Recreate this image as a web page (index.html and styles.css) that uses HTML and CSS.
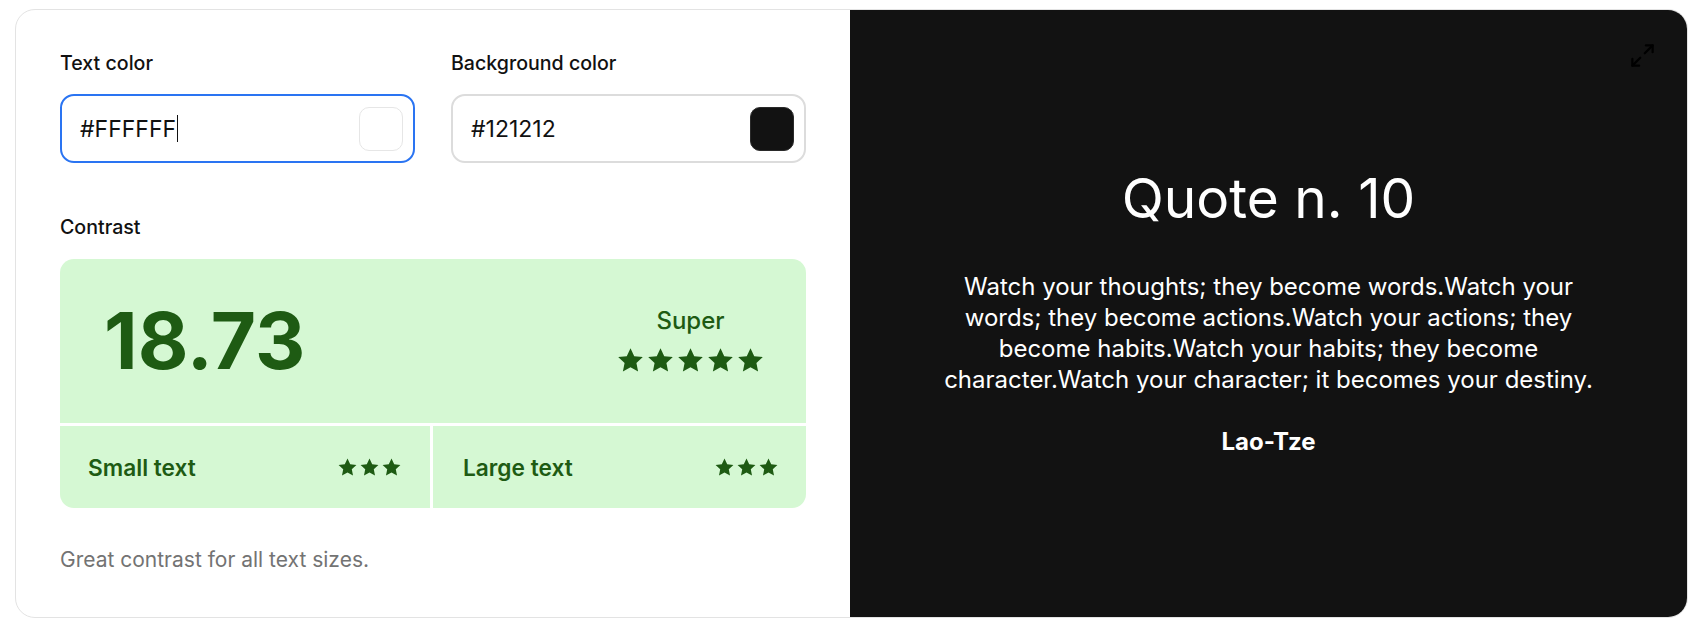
FILE: index.html
```html
<!DOCTYPE html>
<html lang="en">
<head>
<meta charset="utf-8">
<title>Contrast checker</title>
<link rel="stylesheet" href="styles.css">
</head>
<body>
<div class="card">
  <section class="controls">
    <div class="fields">
      <div class="field">
        <div class="label">Text color</div>
        <div class="input focused">
          <span class="value">#FFFFFF<span class="caret"></span></span>
          <span class="swatch swatch-white"></span>
        </div>
      </div>
      <div class="field">
        <div class="label">Background color</div>
        <div class="input">
          <span class="value">#121212</span>
          <span class="swatch swatch-dark"></span>
        </div>
      </div>
    </div>
    <div class="label contrast-label">Contrast</div>
    <div class="result">
      <div class="result-main">
        <div class="ratio">18.73</div>
        <div class="rating">
          <div class="rating-name">Super</div>
          <div class="stars stars-lg">
            <svg viewBox="0 0 24 24"><path d="M12 1.8l3.1 6.6 7.1.8-5.3 4.9 1.4 7.1L12 17.6l-6.3 3.6 1.4-7.1-5.3-4.9 7.1-.8z"/></svg>
            <svg viewBox="0 0 24 24"><path d="M12 1.8l3.1 6.6 7.1.8-5.3 4.9 1.4 7.1L12 17.6l-6.3 3.6 1.4-7.1-5.3-4.9 7.1-.8z"/></svg>
            <svg viewBox="0 0 24 24"><path d="M12 1.8l3.1 6.6 7.1.8-5.3 4.9 1.4 7.1L12 17.6l-6.3 3.6 1.4-7.1-5.3-4.9 7.1-.8z"/></svg>
            <svg viewBox="0 0 24 24"><path d="M12 1.8l3.1 6.6 7.1.8-5.3 4.9 1.4 7.1L12 17.6l-6.3 3.6 1.4-7.1-5.3-4.9 7.1-.8z"/></svg>
            <svg viewBox="0 0 24 24"><path d="M12 1.8l3.1 6.6 7.1.8-5.3 4.9 1.4 7.1L12 17.6l-6.3 3.6 1.4-7.1-5.3-4.9 7.1-.8z"/></svg>
          </div>
        </div>
      </div>
      <div class="result-cell">
        <span class="cell-name">Small text</span>
        <div class="stars stars-sm">
          <svg viewBox="0 0 24 24"><path d="M12 1.8l3.1 6.6 7.1.8-5.3 4.9 1.4 7.1L12 17.6l-6.3 3.6 1.4-7.1-5.3-4.9 7.1-.8z"/></svg>
          <svg viewBox="0 0 24 24"><path d="M12 1.8l3.1 6.6 7.1.8-5.3 4.9 1.4 7.1L12 17.6l-6.3 3.6 1.4-7.1-5.3-4.9 7.1-.8z"/></svg>
          <svg viewBox="0 0 24 24"><path d="M12 1.8l3.1 6.6 7.1.8-5.3 4.9 1.4 7.1L12 17.6l-6.3 3.6 1.4-7.1-5.3-4.9 7.1-.8z"/></svg>
        </div>
      </div>
      <div class="result-cell cell-right">
        <span class="cell-name">Large text</span>
        <div class="stars stars-sm">
          <svg viewBox="0 0 24 24"><path d="M12 1.8l3.1 6.6 7.1.8-5.3 4.9 1.4 7.1L12 17.6l-6.3 3.6 1.4-7.1-5.3-4.9 7.1-.8z"/></svg>
          <svg viewBox="0 0 24 24"><path d="M12 1.8l3.1 6.6 7.1.8-5.3 4.9 1.4 7.1L12 17.6l-6.3 3.6 1.4-7.1-5.3-4.9 7.1-.8z"/></svg>
          <svg viewBox="0 0 24 24"><path d="M12 1.8l3.1 6.6 7.1.8-5.3 4.9 1.4 7.1L12 17.6l-6.3 3.6 1.4-7.1-5.3-4.9 7.1-.8z"/></svg>
        </div>
      </div>
    </div>
    <p class="note">Great contrast for all text sizes.</p>
  </section>
  <section class="preview">
    <button class="expand" aria-label="Fullscreen">
      <svg viewBox="0 0 24 24" fill="none" stroke="currentColor" stroke-width="2" stroke-linecap="round" stroke-linejoin="round"><polyline points="15 3 21 3 21 9"/><polyline points="9 21 3 21 3 15"/><line x1="21" y1="3" x2="14" y2="10"/><line x1="3" y1="21" x2="10" y2="14"/></svg>
    </button>
    <h1 class="quote-title">Quote n. 10</h1>
    <p class="quote-text">Watch your thoughts; they become words.Watch your words; they become actions.Watch your actions; they become habits.Watch your habits; they become character.Watch your character; it becomes your destiny.</p>
    <p class="quote-author">Lao-Tze</p>
  </section>
</div>
</body>
</html>
```

FILE: styles.css
```css
* { box-sizing: border-box; }

html, body {
  margin: 0;
  padding: 0;
  background: #ffffff;
  font-family: Inter, "Noto Sans", "Liberation Sans", sans-serif;
  color: #111111;
}

.card {
  margin: 9px 6px 0 15px;
  height: 609px;
  border: 1px solid #e3e3e3;
  border-radius: 20px;
  overflow: hidden;
  display: grid;
  grid-template-columns: 834px 1fr;
}

/* Left panel */
.controls {
  padding: 41px 44px 0 44px;
  display: flex;
  flex-direction: column;
}

.fields {
  display: grid;
  grid-template-columns: 355px 355px;
  column-gap: 36px;
}

.label {
  font-size: 19.6px;
  font-weight: 500;
  line-height: 24px;
  color: #111;
}

.input {
  margin-top: 19px;
  height: 69px;
  border: 2px solid #dcdcdc;
  border-radius: 14px;
  display: flex;
  align-items: center;
  justify-content: space-between;
  padding: 0 10px 0 18px;
}

.input.focused {
  border-color: #2a74f2;
}

.value {
  font-size: 23px;
  color: #111;
  display: flex;
  align-items: center;
}

.caret {
  display: inline-block;
  width: 1px;
  height: 27px;
  background: #111;
  margin-left: 1px;
}

.swatch {
  width: 44px;
  height: 44px;
  border-radius: 10px;
}

.swatch-white {
  background: #ffffff;
  border: 1px solid #e6e6e6;
}

.swatch-dark {
  background: #121212;
  border: 1px solid #2a2a2a;
}

.contrast-label {
  margin-top: 52px;
}

.result {
  margin-top: 20px;
  display: grid;
  grid-template-columns: 370px 1fr;
  grid-template-rows: 164px 82px;
  gap: 3px;
  border-radius: 14px;
  overflow: hidden;
  color: #1e5b13;
}

.result-main {
  grid-column: 1 / 3;
  background: #d5f8d3;
  display: flex;
  align-items: center;
  justify-content: space-between;
  padding: 0 41px 0 44px;
}

.ratio {
  font-size: 78px;
  font-weight: 700;
  line-height: 1;
}

.rating {
  display: flex;
  flex-direction: column;
  align-items: center;
  gap: 11px;
}

.rating-name {
  font-size: 24px;
  font-weight: 500;
  line-height: 28px;
}

.stars {
  display: flex;
}

.stars svg {
  fill: #1e5b13;
  display: block;
}

.stars-lg { gap: 1px; }
.stars-lg svg { width: 29px; height: 29px; }

.stars-sm { gap: 1px; }
.stars-sm svg { width: 21px; height: 21px; }

.result-cell {
  background: #d5f8d3;
  display: flex;
  align-items: center;
  justify-content: space-between;
  padding: 0 28px 0 28px;
}

.cell-right {
  padding: 0 27px 0 30px;
}

.cell-name {
  font-size: 22.7px;
  font-weight: 600;
}

.note {
  margin: 38px 0 0;
  font-size: 21px;
  line-height: 28px;
  color: #737373;
}

/* Right panel */
.preview {
  position: relative;
  background: #121212;
  color: #ffffff;
  display: flex;
  flex-direction: column;
  align-items: center;
  justify-content: center;
  text-align: center;
  padding: 0 85px 6px;
}

.expand {
  position: absolute;
  top: 32px;
  right: 31px;
  width: 27px;
  height: 27px;
  padding: 0;
  border: none;
  background: transparent;
  color: #000000;
}

.expand svg {
  width: 27px;
  height: 27px;
  display: block;
}

.quote-title {
  margin: 0;
  font-size: 55px;
  font-weight: 400;
  line-height: 66px;
}

.quote-text {
  margin: 40px 0 0;
  font-size: 24px;
  line-height: 31px;
}

.quote-author {
  margin: 31px 0 0;
  font-size: 24px;
  font-weight: 700;
  line-height: 31px;
}
```
